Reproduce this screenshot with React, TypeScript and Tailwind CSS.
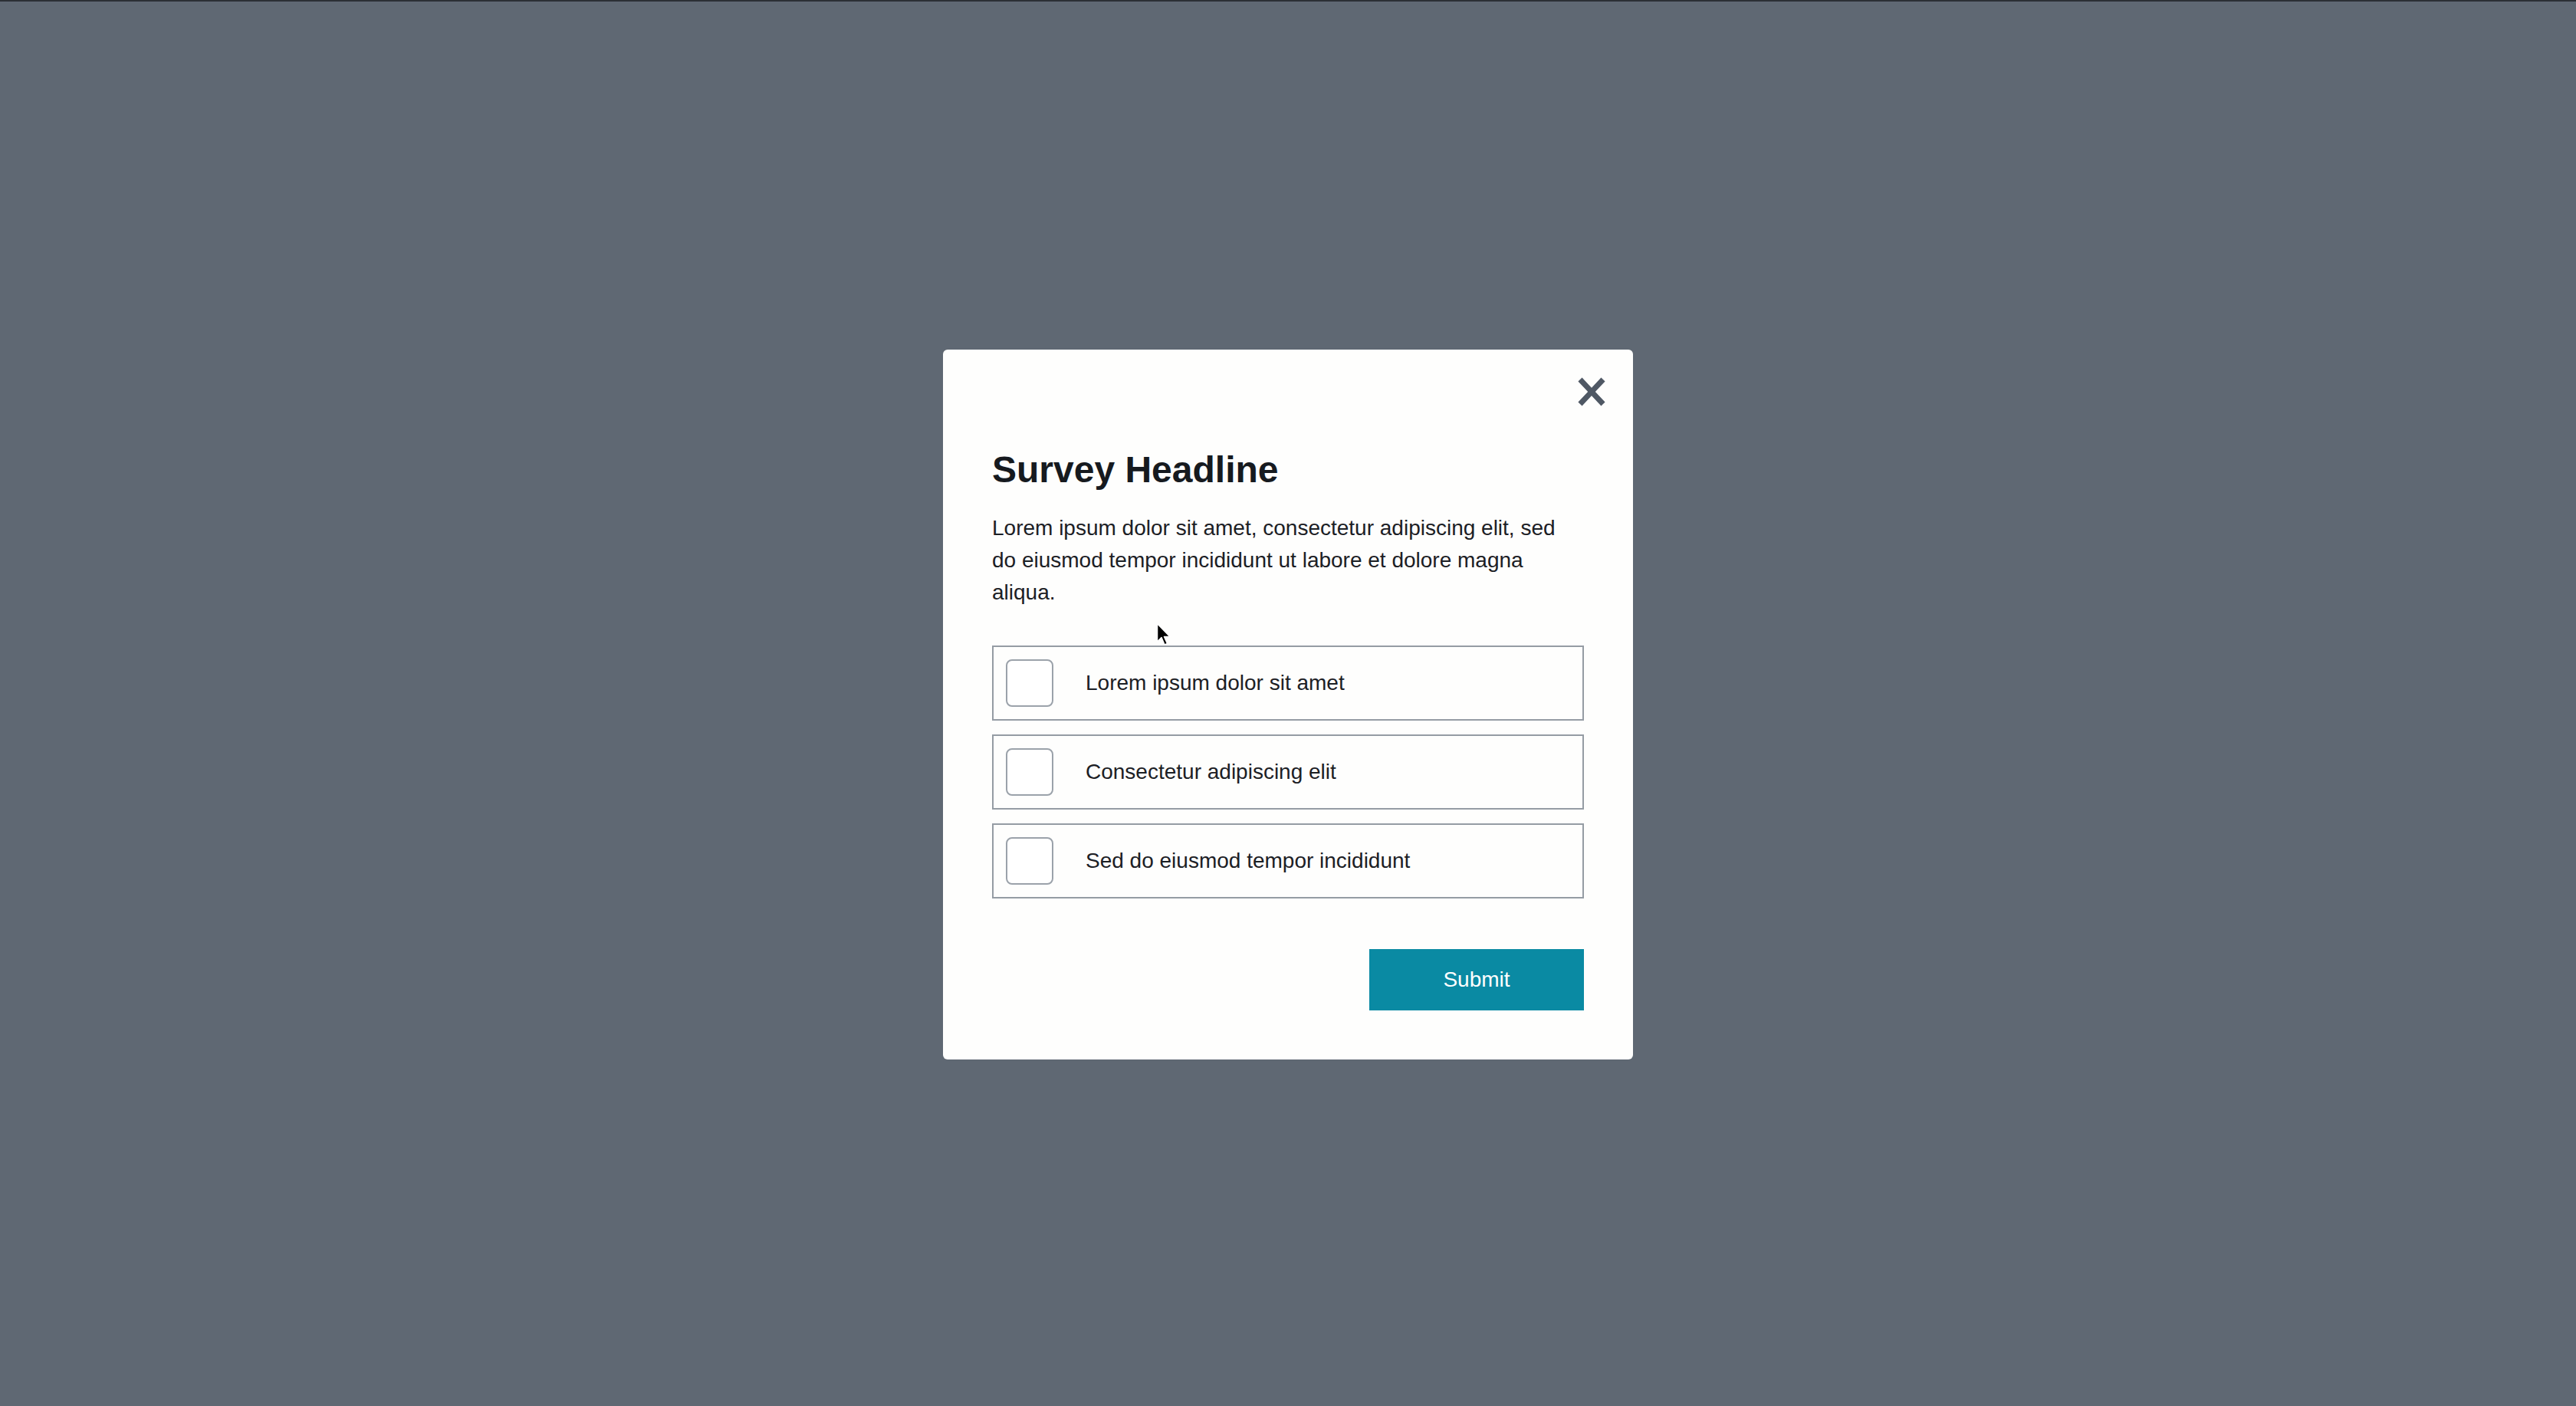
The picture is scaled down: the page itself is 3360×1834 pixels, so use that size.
import { useState } from 'react'

const options = [
  'Lorem ipsum dolor sit amet',
  'Consectetur adipiscing elit',
  'Sed do eiusmod tempor incididunt',
]

function CloseIcon() {
  return (
    <svg width="36" height="38" viewBox="0 0 36 38" fill="none">
      <path d="M3 3 L33 35 M33 3 L3 35" stroke="#4f5864" strokeWidth="7" />
    </svg>
  )
}

function Cursor() {
  return (
    <svg width="20" height="32" viewBox="0 0 20 32">
      <path
        d="M1.5 1.5 L1.5 25 L7 19.5 L11 29 L14.5 27.5 L10.5 18.5 L18 18.5 Z"
        fill="#000"
        stroke="#fff"
        strokeWidth="1.5"
        strokeLinejoin="round"
      />
    </svg>
  )
}

export default function App() {
  const [checked, setChecked] = useState<boolean[]>([false, false, false])

  const toggle = (i: number) => {
    setChecked(prev => prev.map((v, j) => (j === i ? !v : v)))
  }

  return (
    <main
      className="relative flex h-[1834px] w-full items-start justify-center border-t-2 border-[#2b2f35] bg-[#5f6873] pt-[454px]"
      style={{ fontFamily: '"Liberation Sans", Arial, sans-serif' }}
    >
      <div className="relative w-[900px] rounded-[6px] bg-[#fefefd] px-[64px] pt-[128px] pb-[64px]">
        <button className="absolute top-[36px] right-[36px]" aria-label="Close">
          <CloseIcon />
        </button>

        <h1 className="text-[48px] leading-[58px] font-bold text-[#161a1f]">
          Survey Headline
        </h1>
        <p className="mt-[26px] text-[28px] leading-[42px] text-[#1c2025]">
          Lorem ipsum dolor sit amet, consectetur adipiscing elit, sed do eiusmod tempor incididunt ut labore et dolore magna aliqua.
        </p>

        <div className="mt-[48px] flex flex-col gap-[18px]">
          {options.map((label, i) => (
            <label
              key={label}
              className="flex cursor-pointer items-center gap-[42px] border-2 border-[#959ca4] p-[16px]"
            >
              <span
                className={
                  checked[i]
                    ? 'h-[62px] w-[62px] shrink-0 rounded-[8px] border-2 border-[#0a8aa3] bg-[#0a8aa3]'
                    : 'h-[62px] w-[62px] shrink-0 rounded-[8px] border-2 border-[#9ba2aa] bg-white'
                }
              />
              <input
                type="checkbox"
                className="hidden"
                checked={checked[i]}
                onChange={() => toggle(i)}
              />
              <span className="text-[28px] leading-[34px] text-[#1c2025]">{label}</span>
            </label>
          ))}
        </div>

        <div className="mt-[66px] flex justify-end">
          <button className="h-[80px] w-[280px] bg-[#0a8aa3] text-[28px] text-white">
            Submit
          </button>
        </div>
      </div>

      <div className="pointer-events-none absolute top-[810px] left-[1508px]">
        <Cursor />
      </div>
    </main>
  )
}
